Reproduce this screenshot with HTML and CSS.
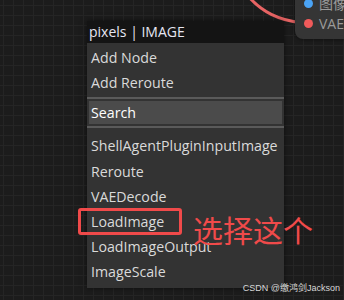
FILE: index.html
```html
<!DOCTYPE html>
<html lang="zh">
<head>
  <meta charset="UTF-8">
  <title>pixels | IMAGE</title>
  <link rel="stylesheet" href="styles.css">
</head>
<body>
  <div class="canvas">
    <svg class="link" width="344" height="300" viewBox="0 0 344 300">
      <path d="M248 -4 C262 12 278 20 302 23" fill="none" stroke="#e86464" stroke-width="3"/>
    </svg>

    <div class="node">
      <div class="slot"><span class="dot blue"></span>图像</div>
      <div class="slot"><span class="dot red"></span>VAE</div>
    </div>

    <div class="menu">
      <div class="menu-title">pixels | IMAGE</div>
      <div class="menu-body">
        <div class="item">Add Node</div>
        <div class="item">Add Reroute</div>
        <div class="sep"></div>
        <div class="item search">Search</div>
        <div class="sep lower"></div>
        <div class="item">ShellAgentPluginInputImage</div>
        <div class="item">Reroute</div>
        <div class="item">VAEDecode</div>
        <div class="item marked">LoadImage</div>
        <div class="item">LoadImageOutput</div>
        <div class="item">ImageScale</div>
      </div>
    </div>

    <div class="callout">选择这个</div>
    <div class="credit">CSDN @缴鸿剑Jackson</div>
  </div>
</body>
</html>
```

FILE: styles.css
```css
body {
  margin: 0;
  background: #1c1c1c;
  font-family: "Open Sans", "Noto Sans CJK SC", sans-serif;
}
.canvas {
  position: relative;
  width: 344px;
  height: 300px;
  overflow: hidden;
  background-color: #1c1c1c;
  background-image:
    linear-gradient(#252525 1px, transparent 1px),
    linear-gradient(90deg, #252525 1px, transparent 1px);
  background-size: 10px 10px;
  background-position: 3px 5px;
}
.link {
  position: absolute;
  left: 0;
  top: 0;
}

.node {
  position: absolute;
  left: 295px;
  top: -13px;
  width: 70px;
  padding: 6px 0 6px 9px;
  background: #353535;
  border-radius: 8px;
  box-shadow: 0 0 4px rgba(0,0,0,0.6);
}
.slot {
  display: flex;
  align-items: center;
  gap: 6px;
  height: 20px;
  font-size: 14px;
  color: #9a9a9a;
}
.dot {
  width: 9px;
  height: 9px;
  border-radius: 50%;
}
.dot.blue { background: #4aa3f5; }
.dot.red { background: #f05a5a; }

.menu {
  position: absolute;
  left: 87px;
  top: 21px;
  width: 197px;
  box-shadow: 0 0 6px rgba(0,0,0,0.5);
}
.menu-title {
  height: 22px;
  line-height: 22px;
  padding: 0 4px 0 2px;
  background: #141414;
  color: #e6e6f2;
  font-size: 14px;
}
.menu-body {
  background: #333;
  padding: 2px 2px 3px;
}
.item {
  height: 25.2px;
  line-height: 25px;
  padding: 0 2px;
  color: #dadada;
  font-size: 14.2px;
  white-space: nowrap;
}
.item.search {
  height: 23px;
  line-height: 23px;
  margin: 2px 0;
  background: #4b4b4b;
  color: #fff;
}
.sep {
  height: 2px;
  margin: 2px -2px;
  background: #5a5a5a;
}
.sep.lower {
  margin-bottom: 5px;
}
.item.marked {
  position: relative;
}
.item.marked::after {
  content: "";
  position: absolute;
  left: -11px;
  top: -1px;
  width: 98px;
  height: 21px;
  border: 3px solid #f04a4a;
  border-radius: 3px;
}

.callout {
  position: absolute;
  left: 193px;
  top: 211px;
  font-size: 30px;
  line-height: 36px;
  color: #f04a4a;
  font-family: "Noto Sans CJK SC", sans-serif;
}
.credit {
  position: absolute;
  right: 4px;
  bottom: 6px;
  font-size: 9px;
  color: #d8d8d8;
  font-family: "Liberation Sans", "Noto Sans CJK SC", sans-serif;
}
```
